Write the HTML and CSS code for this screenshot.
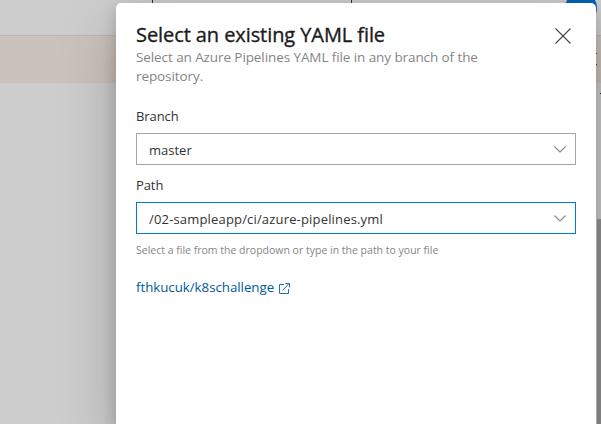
FILE: index.html
```
<!DOCTYPE html>
<html lang="en">
<head>
<meta charset="utf-8">
<title>Select an existing YAML file</title>
<link rel="stylesheet" href="styles.css">
</head>
<body>
<div class="page">
  <div class="page-header"><span class="divider"></span><span class="divider"></span></div>
  <div class="banner"></div>
</div>
<div class="avatar"></div>
<main class="dialog">
  <header class="dialog-header">
    <div>
      <h1>Select an existing YAML file</h1>
      <p class="subtitle"><span class="line-one">Select an Azure Pipelines YAML file in any branch of the</span><br>repository.</p>
    </div>
    <svg class="close" width="18" height="18" viewBox="0 0 18 18"><path d="M1.5 1.5l15 15M16.5 1.5l-15 15"/></svg>
  </header>
  <label>Branch</label>
  <div class="field"><span class="branch">master</span><svg class="chevron" width="12" height="7" viewBox="0 0 12 7"><path d="M.5.5L6 6 11.5.5"/></svg></div>
  <label>Path</label>
  <div class="field focused"><span class="path">/02-sampleapp/ci/azure-pipelines.yml</span><svg class="chevron" width="12" height="7" viewBox="0 0 12 7"><path d="M.5.5L6 6 11.5.5"/></svg></div>
  <p class="hint"><span>Select a file from the dropdown or type in the path to your file</span></p>
  <a class="repo"><span>fthkucuk/k8schallenge</span><svg width="11" height="11" viewBox="0 0 11 11"><path d="M5 1.5H.5v9h9V6M3.500 7.500l6.500-7M6.500.5h4v4"/></svg></a>
</main>
<div class="edge"><i class="dot one"></i><i class="dot two"></i><i class="dot three"></i><i class="thumb"></i></div>
</body>
</html>
```
FILE: styles.css
```
* { box-sizing: border-box; }
body {
  margin: 0;
  width: 601px;
  height: 424px;
  overflow: hidden;
  position: relative;
  background: #cdcdcd;
  font-family: "Open Sans", "Noto Sans", sans-serif;
  color: #333;
}
.page { position: absolute; inset: 0; }
.page-header { height: 36px; border-bottom: 1px solid #bab6b3; display: flex; padding-left: 152px; gap: 198px; }
.divider { width: 1px; height: 3px; background: #333; }
.banner { height: 47px; background: #cbc2bb; }
.avatar { position: absolute; left: 565px; top: -8px; width: 32px; height: 32px; border-radius: 50%; background: #0062b8; }
.dialog {
  position: absolute;
  left: 116px;
  top: 3px;
  width: 480px;
  height: 421px;
  padding: 19px 20px;
  background: #fff;
  border-radius: 5px 5px 0 0;
  box-shadow: 0 25px 58px rgba(0,0,0,.22), 0 5px 15px rgba(0,0,0,.18);
}
.dialog-header { display: flex; justify-content: space-between; height: 84px; }
h1 { margin: 0; font-size: 20px; line-height: 26px; font-weight: 500; letter-spacing: -.08px; -webkit-text-stroke: .35px #1b1b1b; color: #1b1b1b; white-space: nowrap; }
.subtitle { margin: 0; font-size: 13.5px; line-height: 19px; letter-spacing: -.09px; color: #858585; white-space: nowrap; }
.close { margin: 5px 4px 0 0; }
svg { fill: none; stroke: #444; stroke-width: 1.1; flex: none; }
label { display: block; font-size: 13px; line-height: 20px; height: 27px; letter-spacing: -.1px; }
.field { display: flex; align-items: center; justify-content: space-between; height: 32px; border: 1px solid #a6a6a6; padding: 2px 9px 0 12px; margin-bottom: 10px; font-size: 13px; line-height: 20px; }
.focused { border-color: #0078d4; margin-bottom: 8px; }
.path { letter-spacing: .17px; }
.chevron { stroke: #888; margin-top: -1px; }
.hint { margin: 0; font-size: 10.5px; line-height: 16px; color: #858585; white-space: nowrap; }
.repo { display: flex; align-items: center; gap: 5px; margin-top: 18px; height: 22px; font-size: 13.3px; line-height: 20px; letter-spacing: -.03px; color: #005a9e; }
.repo svg { stroke: #1c72b5; stroke-width: 1; margin-top: 2px; }
.edge { position: absolute; left: 596px; top: 0; width: 5px; height: 424px; }
.edge i { position: absolute; }
.dot { width: 1px; height: 1px; background: #293b8c; }
.one { left: 0; top: 53px; }
.two { left: 0; top: 64px; }
.three { left: 4px; top: 93px; background: #222; }
.thumb { left: 1px; top: 219px; width: 4px; height: 205px; background: #7e7e7e; }
```
